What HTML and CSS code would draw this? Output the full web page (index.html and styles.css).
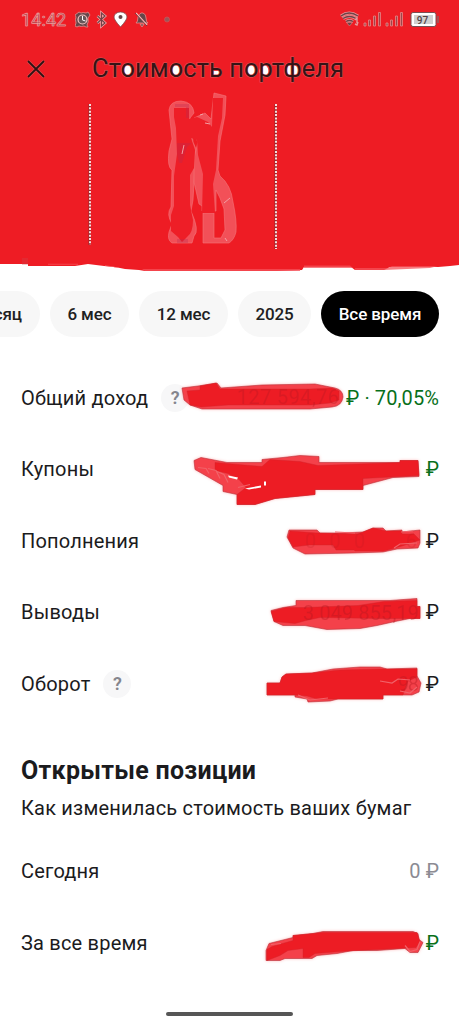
FILE: index.html
```html
<!DOCTYPE html>
<html lang="ru">
<head>
<meta charset="utf-8">
<title>Стоимость портфеля</title>
<link rel="stylesheet" href="styles.css">
</head>
<body>
<div class="screen">
<header class="header">
  <svg class="paint" viewBox="0 0 459 272" width="459" height="272">
    <path fill="#ee1c24" d="M0 0H459V265L450 266 438 267H390L384 270H355L351 267H304L302 270 277 271H145L139 270 125 269 115 267 104 266 88 264 75 266H28V264H0Z"/>
    <path fill="#f5525a" opacity=".75" d="M142 269H300V271H145ZM304 265.500H350L353 268H304ZM355 268H388L392 266H438L430 268 384 270H355ZM105 265l16 3-16-2ZM48 263.700h30v1H48Z"/>
    <g fill="#f25058" stroke="#f3757b" stroke-width=".6">
      <path d="M169 110Q170 101 181 101 193 102 194 113L190 118 193 142 196 149 193 200 191 211Q200 231 194 236L192 243H172Q167 240 169 232L172 224Q166 214 171 207L172 170Q167 167 169 151L172 139Z"/>
      <path d="M214 93 226 96 225 115 220 141 218 170 220 176Q231 185 233 202 237 221 236 232 234 240 229 243H203V213H214V238H221L225 230 224 209 220 198 216 190V211H202V206L199 204 194 182V158L198 142 192 130 194 118 205 113 211 119Z"/>
    </g>
    <g fill="#ee1e27">
      <path d="M174 108H189V119L197 117 208 122 212 127 213 98 223 98 222 118 218 136 216 170 213 184 215 213H202L203 174 198 155 197 140 191 138 195 150 194 168 190 175 190 205 193 220Q193 233 187 237L182 242 178 237 171 231 171 215 174 206 174 176 177 154 176 128 174 117Z"/>
    </g>
    <path fill="#b52c52" opacity=".3" d="M175 104h14v14h-3v-11h-11ZM177 143h15l-5 4-5 16h-3l-2-9ZM177 239h11v4h-11Z"/>
    <path fill="none" stroke="#f3a0a5" stroke-width="1" d="m182 154 2-9m16-30 3-1m2 9 5 1m14 79 6-5m-5 40 2 3"/>
    <path stroke="#98272b" stroke-width="2" d="M89.500 104V245M275.500 104V249"/>
    <path stroke="#fff" stroke-width="1.700" stroke-dasharray="2 1.350" d="M90 104V245M276 104V249"/>
    <path fill="#c94a50" opacity=".3" d="M22 258h6v7h-6Z"/>
  </svg>
  <div class="status">
    <span class="clock">14:42</span>
    <svg class="status-icons" viewBox="75 8 98 24" width="98" height="24">
      <g fill="#64474a" stroke="#e88d8e" stroke-width=".8">
        <path d="m75 15 4-3 2 1q2-1 5 0l2-1 2 3-2 3q1 4-1 7l1 2-2 0-2-1q-3 1-5 0l-2 1-2-1 1-3q-1-4 0-6Z"/>
        <path fill="none" stroke="#f3aaab" stroke-width="2.600" d="m97.500 16 7.500 7-3.500 3V13l3.500 3-7.500 7"/>
        <path fill="none" stroke="#734247" stroke-width="1.200" d="m97.500 16 7.500 7-3.500 3V13l3.500 3-7.500 7"/>
        <path fill="#fff" stroke="#7f464a" d="M120.500 27Q114 20 114 17a6.500 5 0 0 1 13 0Q127 20 120.500 27Z"/>
        <circle cx="120.500" cy="17" r="2" stroke="none"/>
        <path d="M136 23q2-1 2-6 1-3 3-4h2q3 1 3 5 0 4 2 5ZM140 24h4l-2 3Z"/>
        <path fill="none" stroke="#ffb5b5" stroke-width="1.500" d="m136 13 11 12"/>
        <path fill="none" stroke="#54383c" d="m135 13 12 13"/>
        <circle cx="167" cy="19.500" r="2.500" fill="#9b5558" stroke="#c95659"/>
      </g>
      <circle cx="82.500" cy="19.500" r="4.500" fill="#67585a" stroke="#f7c4c4" stroke-width="1.200"/>
      <path fill="none" stroke="#fff" d="M82.500 16v4l3 1"/>
    </svg>
    <svg class="system" viewBox="339 8 100 24" width="100" height="24">
      <g fill="none" stroke="#e79496" stroke-width="3">
        <path d="M341 16q8-6 17 0m-15 2.500q6.500-4 13 0m-10 3q3.500-2 7 0"/>
      </g>
      <g fill="none" stroke="#704247" stroke-width="1.400">
        <path d="M341 16q8-6 17 0m-15 2.500q6.500-4 13 0m-10 3q3.500-2 7 0"/>
        <path stroke="#e5999b" d="m355 20 2-2v5m-2 1 2 1 1-3"/>
      </g>
      <path fill="#704247" stroke="#e79496" stroke-width=".5" d="m346.500 22.500h6l-3 3.500Z"/>
      <g fill="#9c474c" stroke="#ea8587" stroke-width=".8">
        <path d="M364 23h2v3h-2ZM368.500 20h2v6h-2ZM373.500 16h2v10h-2ZM378.500 12.500h2v13.500h-2ZM386 23h2v3h-2ZM390.500 20h2v6h-2ZM395.500 16h2v10h-2ZM400.500 12.500h2v13.500h-2Z"/>
      </g>
      <rect x="411" y="12.500" width="25" height="14" rx="2" fill="#fff" stroke="#784f52"/>
      <rect x="414" y="15" width="19" height="9" fill="#d0d0d0"/>
      <rect x="437" y="16" width="2" height="7" fill="#a84c51"/>
      <text class="battery-text" x="422.500" y="23.500" text-anchor="middle">97</text>
    </svg>
  </div>
  <div class="titlebar">
    <svg class="close" viewBox="0 0 20 20" width="20" height="20"><path fill="none" stroke="#de5a5d" stroke-width="3" d="m2 2 16 16m0-16L2 18"/><path fill="none" stroke="#301113" stroke-width="1.800" d="m2 2 16 16m0-16L2 18"/></svg>
    <svg class="title" viewBox="92 50 260 40" width="260" height="40">
      <ellipse cx="127.500" cy="71" rx="5" ry="6" fill="#fff"/><ellipse cx="176" cy="71" rx="5" ry="6" fill="#fff"/><ellipse cx="251" cy="71" rx="5" ry="6" fill="#fff"/><ellipse cx="264" cy="71" rx="4.500" ry="6" fill="#fff"/><ellipse cx="292" cy="71" rx="7.500" ry="6" fill="#fff"/><path fill="#fff" d="M212 71h8v5h-8Z"/>
      <text class="title-text" x="92" y="77" textLength="252">Стоимость портфеля</text>
    </svg>
  </div>
</header>
<nav class="chips">
  <span class="chip month">сяц</span><span class="chip half">6 мес</span><span class="chip year">12 мес</span><span class="chip date">2025</span><span class="chip all">Все время</span>
</nav>
<main>
<section class="totals">
  <div class="row income"><span class="label">Общий доход</span><span class="help">?</span><span class="amount green"><span class="ruble">₽</span> · 70,05%</span>
    <svg class="stroke" viewBox="0 362 459 72">
      <path class="glow" d="M182 388 198 386 217 383 221 388 262 385 315 384 335 388Q343 390 343 397 342 406 332 407L310 409H202L190 405 184 400Z"/>
      <path class="core" d="M187 391 200 390 200 386 216 383 220 389 310 389 332 388 339 391 339 400 330 403 311 405 228 405 201 407 190 405Z"/>
      <text class="under dim" x="237" y="404" textLength="102">127 594,76</text>
    </svg></div>
  <div class="row"><span class="label">Купоны</span><span class="amount green ruble">₽</span>
    <svg class="stroke" viewBox="0 433.500 459 72">
      <path class="glow" d="M194 460 201 457 227 462H262V459L283 457 300 455 319 456V462H400V460H418L419 476 393 477 363 485V489H315V494L275 498 255 504H237V494L223 491V485L195 469Z"/>
      <path class="core" d="M215 462 262 466 270 459 300 461 318 465 400 462V460H418L419 475 363 478V489H315V494L275 498 255 504H237V494L246 487 239 479 228 473 215 470Z"/>
      <path fill="#fff" d="m228 475 10 2-1 2-8-2ZM245 488l16-3v2l-12 2ZM264 481h2v4h-2Z"/>
      <path class="light" d="m198 467 8 1 3 5m-1-5 8 2 4 8m-3-7 7 3 4 8m10 5 12-3"/>
    </svg></div>
  <div class="row"><span class="label">Пополнения</span><span class="amount ruble">₽</span>
    <svg class="stroke" viewBox="0 505 459 72">
      <path class="glow" d="M289 530H317L320 533H342L363 532 373 528H383L386 531 402 530V532L420 530V543L418 548 397 549 383 552 353 553 305 554 293 548 287 537Z"/>
      <path class="core" d="M290 531 318 533 358 534 373 528 386 531H402V534H414L420 540 402 546 384 551 355 551 354 550H336L333 545H309L293 547 288 538Z"/>
      <text class="under faint" x="305" y="548" textLength="112">0 0 0    6</text>
      <path class="light" d="m335 532 20 1m39 15 6-4 17-1m-16-11 12-1"/>
    </svg></div>
  <div class="row"><span class="label">Выводы</span><span class="amount ruble">₽</span>
    <svg class="stroke" viewBox="0 576.500 459 72">
      <path class="glow" d="M296 600H390L417 598V606H420V618H410L395 621 377 625 360 628 327 629 305 625H283L274 621 271 610 283 607 296 605Z"/>
      <path class="core" d="M271 611 286 607 304 607 358 605 384 601 417 600V606H420V618L380 618 320 617 306 620 295 623 274 621Z"/>
      <text class="under" x="303" y="619" textLength="116">3 049 855,19</text>
    </svg></div>
  <div class="row"><span class="label">Оборот</span><span class="help">?</span><span class="amount ruble">₽</span>
    <svg class="stroke" viewBox="0 648 459 72">
      <path class="glow" d="M267 683H280L282 677 286 674 312 673 333 669 360 667H380L387 669 417 668V676L421 683 419 692 412 695H383V699H338L330 701 308 702 307 699 295 697V695H267Z"/>
      <path class="core" d="M267 683H280L282 677 286 674 312 673 340 670 380 669 417 669 417 677 408 681 403 695H383V699H335L317 699 307 696 294 695H267Z"/>
      <text class="under" x="398" y="691" textLength="21">98</text>
      <path class="light" d="m380 681 12 2 6-4 12 1m-10 11 10 2 7-6m-119 8 12 5 18-2"/>
    </svg></div>
</section>
<section>
  <h2>Открытые позиции</h2>
  <p>Как изменилась стоимость ваших бумаг</p>
  <div class="row"><span class="label">Сегодня</span><span class="amount muted">0 <span class="ruble">₽</span></span></div>
  <div class="row"><span class="label">За все время</span><span class="amount green ruble">₽</span>
    <svg class="stroke" viewBox="0 906.500 459 72">
      <path class="glow" d="M266 950 269 943 293 937V935L313 933 323 931H413L418 933 419 939 423 942 418 952H410L405 948 377 950H353L337 953 317 955 312 958H285L280 960H266Z"/>
      <path class="core" d="M267 949 272 946 293 940V935L313 933 323 932H417L420 941 416 947 377 949 340 951 315 953 309 957 303 957V948L288 950 280 955 267 960Z"/>
      <path class="light" d="m405 945 5 6 7-2 3-8m-149 3 10-1"/>
    </svg></div>
</section>
</main>
<div class="home"></div>
</div>
</body>
</html>
```
FILE: styles.css
```css
* { box-sizing: border-box; }
body { margin: 0; background: #fff; font-family: Roboto, "Noto Sans", sans-serif; color: #1b1b1d; }
.screen { position: relative; width: 459px; height: 1024px; overflow: hidden; background: #fff; }
.header { position: relative; height: 272px; }
.paint { position: absolute; inset: 0; }
.status { position: relative; display: flex; height: 40px; padding: 8px 20px 0 21px; align-items: flex-start; }
.clock { width: 54px; font-size: 18px; line-height: 24px; letter-spacing: .1px; color: #be484d; text-shadow: 0 0 1px #ffd0d0; -webkit-text-stroke: .4px #efabab; }
.system { margin-left: auto; }
.battery-text { font: 500 10px Roboto, sans-serif; fill: #514345; }
.titlebar { position: relative; display: flex; height: 60px; align-items: flex-start; padding: 10px 0 0 26px; }
.close { margin-top: 9px; margin-right: 46px; }
.title-text { font: 400 25.5px Roboto, sans-serif; fill: #351416; stroke: #de5a5d; stroke-width: 1px; paint-order: stroke; }
.chips { display: flex; gap: 10px; margin-top: 19px; height: 46px; justify-content: flex-end; padding-right: 20px; }
.chip { flex: none; display: flex; align-items: center; justify-content: center; height: 46px; padding-bottom: 1px; border-radius: 23px; background: #f7f7f7; font-size: 17px; font-weight: 500; letter-spacing: -.1px; white-space: nowrap; color: #202022; }
.month { width: 88px; justify-content: flex-end; padding-right: 18px; }
.half { width: 79px; }
.year { width: 89px; }
.date { width: 73px; }
.all { width: 118px; background: #000; color: #fff; }
.totals { padding-top: 25px; }
.row { position: relative; display: flex; align-items: center; height: 71.500px; padding: 0 20px 0 21px; font-size: 20px; letter-spacing: .2px; }
.help { display: grid; place-items: center; width: 28px; height: 28px; margin-left: 13px; border-radius: 50%; background: #f7f7f8; color: #85858d; font-size: 18px; font-weight: 600; }
.amount { margin-left: auto; white-space: nowrap; letter-spacing: .1px; position: relative; }
.green { color: #08701a; }
.muted { color: #8b8b93; }
.stroke { position: absolute; left: 0; top: 0; width: 459px; height: 72px; overflow: visible; }
.glow { fill: #f4414a; stroke: #b9333b; stroke-width: .6; filter: drop-shadow(0 0 1.500px #ffb9bb); }
.core { fill: #ed1c24; stroke: #ce232a; stroke-width: .4; }
.under { font: 20px Roboto, sans-serif; fill: #b81922; opacity: .4; white-space: pre; letter-spacing: 0; }
.dim { opacity: .35; }
.faint { opacity: .2; }
.light { fill: none; stroke: #f16269; stroke-width: 1.200; }
h2 { margin: 36px 0 0 21px; font-size: 25px; line-height: 30px; font-weight: 700; letter-spacing: .28px; }
p { margin: 8px 0 0 21px; font-size: 20px; line-height: 28px; letter-spacing: .21px; }
p + .row { margin-top: 14px; }
.home { position: absolute; left: 166px; top: 1012px; width: 127px; height: 4px; border-radius: 2px; background: #565656; }
```
